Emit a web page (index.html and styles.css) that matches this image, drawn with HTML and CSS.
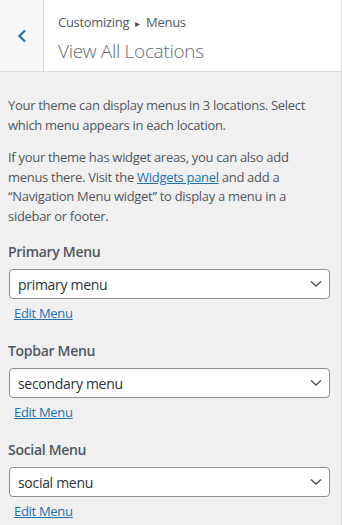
FILE: index.html
```html
<!doctype html>
<html lang="en">
  <head>
    <meta charset="UTF-8" />
    <meta name="viewport" content="width=device-width, initial-scale=1.0" />
    <title>View All Locations</title>
    <link rel="stylesheet" href="styles.css">
  </head>
  <body>
    <div class="panel">
      <div class="panel-header">
        <button class="back-button" aria-label="Back">
          <svg width="10" height="14" viewBox="0 0 10 14">
            <path d="M8 1.5 L2.5 7 L8 12.5" fill="none" stroke="#2271b1" stroke-width="2.2" />
          </svg>
        </button>
        <div class="panel-title">
          <span class="breadcrumb">Customizing <span class="sep">&#9656;</span> Menus</span>
          <h2>View All Locations</h2>
        </div>
      </div>

      <div class="panel-content">
        <div class="intro">
          <p>Your theme can display menus in 3 locations. Select which menu appears in each location.</p>
          <p>If your theme has widget areas, you can also add menus there. Visit the <a href="#">Widgets panel</a> and add a &ldquo;Navigation Menu widget&rdquo; to display a menu in a sidebar or footer.</p>
        </div>

        <div class="location">
          <label for="loc-primary">Primary Menu</label>
          <div class="select-wrap">
            <select id="loc-primary">
              <option>primary menu</option>
            </select>
            <svg class="select-arrow" width="12" height="8" viewBox="0 0 12 8">
              <path d="M1 1.5 L6 6 L11 1.5" fill="none" stroke="#50575e" stroke-width="1.6" />
            </svg>
          </div>
          <a class="edit-menu" href="#">Edit Menu</a>
        </div>

        <div class="location">
          <label for="loc-topbar">Topbar Menu</label>
          <div class="select-wrap">
            <select id="loc-topbar">
              <option>secondary menu</option>
            </select>
            <svg class="select-arrow" width="12" height="8" viewBox="0 0 12 8">
              <path d="M1 1.5 L6 6 L11 1.5" fill="none" stroke="#50575e" stroke-width="1.6" />
            </svg>
          </div>
          <a class="edit-menu" href="#">Edit Menu</a>
        </div>

        <div class="location">
          <label for="loc-social">Social Menu</label>
          <div class="select-wrap">
            <select id="loc-social">
              <option>social menu</option>
            </select>
            <svg class="select-arrow" width="12" height="8" viewBox="0 0 12 8">
              <path d="M1 1.5 L6 6 L11 1.5" fill="none" stroke="#50575e" stroke-width="1.6" />
            </svg>
          </div>
          <a class="edit-menu" href="#">Edit Menu</a>
        </div>
      </div>
    </div>
  </body>
</html>
```

FILE: styles.css
```css
body {
  margin: 0;
  font-family: "Open Sans", "Noto Sans", sans-serif;
  font-size: 13px;
  letter-spacing: -0.3px;
  color: #50575e;
  background: #f0f0f1;
}

.panel {
  width: 341px;
  min-height: 525px;
  border-right: 1px solid #dcdcde;
  background: #f0f0f1;
}

.panel-header {
  display: flex;
  height: 71px;
  background: #fff;
  border-bottom: 1px solid #dcdcde;
}

.back-button {
  width: 44px;
  padding: 0;
  border: none;
  border-right: 1px solid #dcdcde;
  background: #f6f7f7;
  display: flex;
  align-items: center;
  justify-content: center;
  cursor: pointer;
}

.panel-title {
  padding: 12px 0 0 14px;
}

.breadcrumb {
  display: block;
  font-size: 13px;
  line-height: 20px;
  color: #50575e;
}

.sep {
  font-size: 10px;
  margin: 0 3px;
}

.panel-title h2 {
  margin: 5px 0 0;
  font-size: 19px;
  font-weight: 300;
  line-height: 26px;
  color: #646970;
}

.panel-content {
  padding: 24px 11px 0 8px;
}

.intro {
  margin-bottom: 16px;
}

.intro p {
  margin: 0 0 13px;
  line-height: 19.5px;
}

.intro p:last-child {
  margin-bottom: 0;
}

.intro a,
.edit-menu {
  color: #2271b1;
  text-decoration: underline;
}

.location {
  margin-bottom: 18px;
}

.location label {
  display: block;
  font-size: 14px;
  font-weight: 600;
  line-height: 20px;
  margin-bottom: 7px;
}

.select-wrap {
  position: relative;
  margin-left: 1px;
}

.select-wrap select {
  display: block;
  width: 100%;
  height: 30px;
  padding: 0 30px 0 8px;
  font-family: inherit;
  font-size: 14px;
  letter-spacing: -0.3px;
  color: #2c3338;
  background: #fff;
  border: 1px solid #8c8f94;
  border-radius: 4px;
  appearance: none;
  -webkit-appearance: none;
}

.select-arrow {
  position: absolute;
  right: 8px;
  top: 11px;
  pointer-events: none;
}

.edit-menu {
  display: inline-block;
  margin: 4px 0 0 6px;
  font-size: 13px;
  line-height: 20px;
}
```
